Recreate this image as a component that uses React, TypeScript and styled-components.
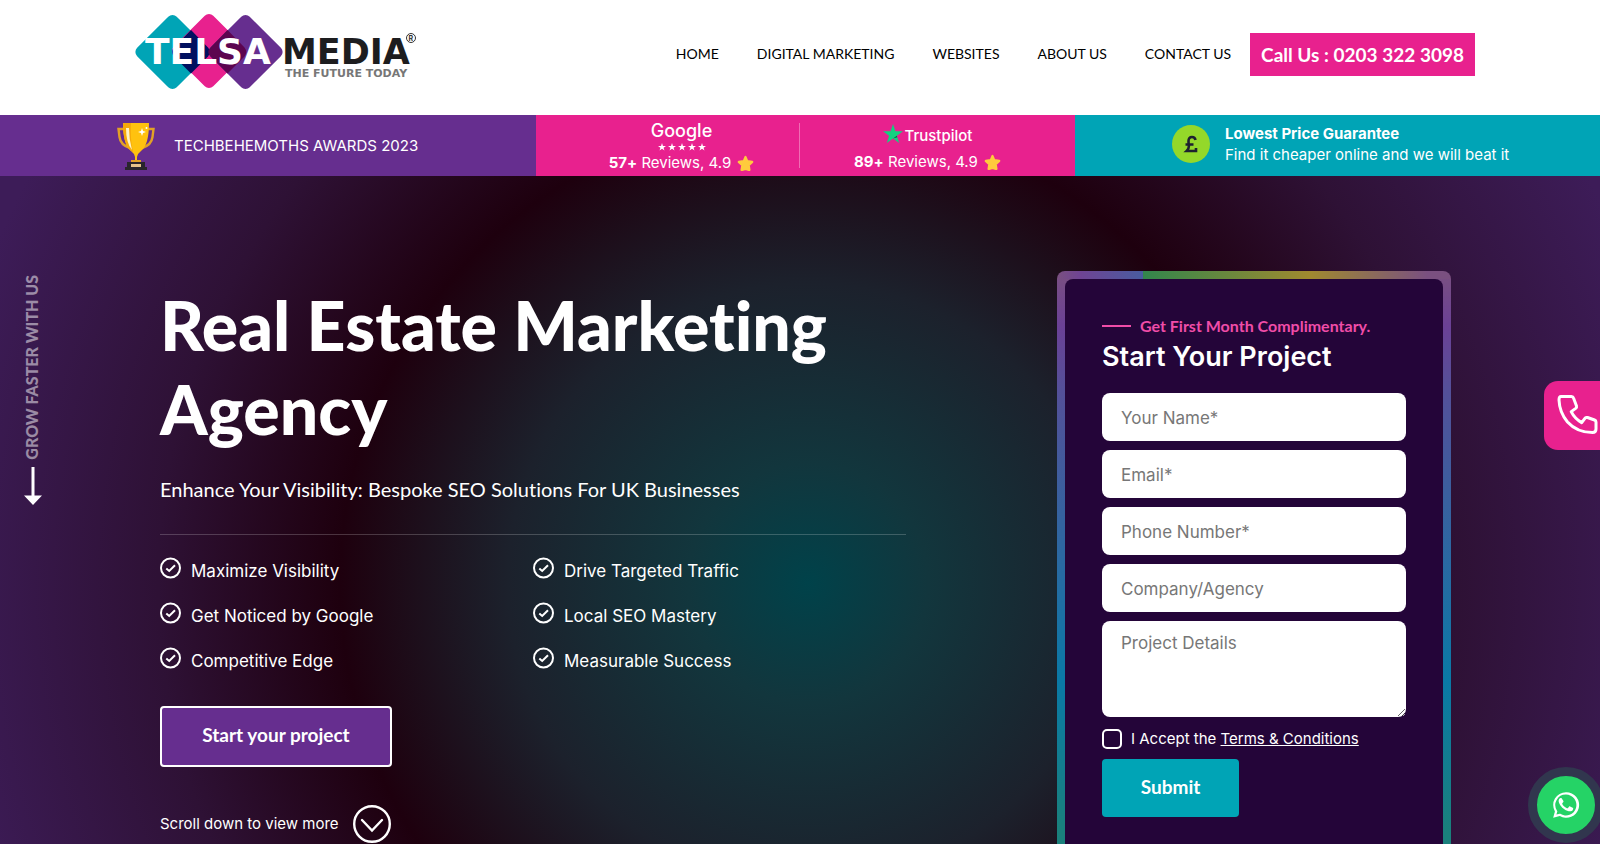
import React from 'react';
import styled, { createGlobalStyle } from 'styled-components';

const display = `Lato, "Liberation Sans", sans-serif`;
const body = `Inter, "Liberation Sans", sans-serif`;

const GlobalStyle = createGlobalStyle`
  *, *::before, *::after { box-sizing: border-box; }
  html { scrollbar-width: none; }
  body { margin: 0; background: #fff; color: #fff; font-family: ${body}; font-variant-ligatures: none; overflow-x: hidden; }
  h1, h2, p, ul { margin: 0; padding: 0; }
  ul { list-style: none; }
  a { color: inherit; text-decoration: none; }
`;

const Page = styled.div`
  height: 100vh;
  overflow: hidden auto;
  scrollbar-width: none;
`;

const Header = styled.header`
  display: flex;
  align-items: flex-start;
  justify-content: space-between;
  height: 115px;
  padding: 12px 125px 0 135px;
  background: #fff;
`;

const LogoLink = styled.a`
  display: block;
  line-height: 0;
`;

const Nav = styled.nav`
  display: flex;
  align-items: center;
  padding-top: 21px;
  color: #000;
  font-family: ${display};
  font-size: 14px;
  line-height: 20px;
`;

const NavLinks = styled.ul`
  display: flex;
  gap: 38px;
  margin-right: 19px;
  padding-bottom: 1px;
`;

const CallLink = styled.a`
  padding: 0 11px;
  background: #e8218e;
  color: #fff;
  font-weight: 700;
  font-size: 19px;
  line-height: 43px;
`;

const Bar = styled.div`
  display: grid;
  grid-template-columns: 536fr 264fr 275fr 525fr;
  height: 61px;
`;

const BarCell = styled.div<{ $bg: string; $left: number; $gap: number }>`
  display: flex;
  align-items: center;
  gap: ${(p) => p.$gap}px;
  padding-left: ${(p) => p.$left}px;
  background: ${(p) => p.$bg};
  font-size: 15px;
  line-height: 21px;
`;

const Guarantee = styled(BarCell)`
  padding-bottom: 3px;
`;

const ReviewCell = styled.div<{ $divider?: boolean }>`
  position: relative;
  display: flex;
  flex-direction: column;
  align-items: center;
  padding: 5px ${(p) => (p.$divider ? 0 : 20)}px 0 ${(p) => (p.$divider ? 27 : 0)}px;
  background: #e8218e;
  &::after {
    content: '';
    position: absolute;
    inset: 8px 0 8px auto;
    width: ${(p) => (p.$divider ? 1 : 0)}px;
    background: #f06cb4;
  }
`;

const Brand = styled.div<{ $size: number; $height: number }>`
  display: flex;
  align-items: center;
  gap: 2px;
  font-size: ${(p) => p.$size}px;
  line-height: ${(p) => p.$height}px;
  font-weight: 500;
  svg { margin-bottom: 4px; }
`;

const StarRow = styled.div`
  display: flex;
  gap: 2px;
  height: 12px;
  align-items: center;
`;

const Reviews = styled.p`
  display: flex;
  align-items: center;
  gap: 6px;
  font-size: 15px;
  line-height: 20px;
`;

const Hero = styled.section`
  position: relative;
  display: flex;
  justify-content: space-between;
  align-items: flex-start;
  padding: 95px 149px 40px 160px;
  background: radial-gradient(
    circle at 50.5% 407px,
    #00424a 0,
    #12363d 120px,
    #1c212c 300px,
    #1e000e 468px,
    #2e1135 650px,
    #3d1c58 880px
  );
`;

const Intro = styled.div`
  width: 746px;
  padding-top: 12px;
`;

const Title = styled.h1`
  font: 900 68px/84px ${display};
  font-variant-ligatures: none;
`;

const Lead = styled.p`
  padding: 26px 0 33px;
  border-bottom: 1px solid rgba(255, 255, 255, 0.2);
  font-family: ${display};
  font-size: 20px;
  line-height: 24px;
`;

const Benefits = styled.ul`
  display: grid;
  grid-template-columns: 1fr 1fr;
  row-gap: 23px;
  padding: 22px 0 37px;
`;

const Benefit = styled.li`
  display: flex;
  gap: 9px;
  font-size: 17px;
  line-height: 22px;
  svg { flex: none; }
  span { padding-top: 3px; height: 22px; }
`;

const StartLink = styled.a`
  display: block;
  width: 232px;
  padding-bottom: 3px;
  border: 2px solid #fff;
  border-radius: 4px;
  background: #662e8f;
  text-align: center;
  font-family: ${display};
  font-weight: 700;
  font-size: 19px;
  line-height: 54px;
`;

const ScrollLink = styled.a`
  display: flex;
  align-items: center;
  gap: 14px;
  margin-top: 38px;
  font-size: 15px;
  line-height: 20px;
`;

const Card = styled.form`
  width: 394px;
  padding: 8px;
  border-radius: 8px;
  background:
    linear-gradient(90deg, #7a5080 0, #6f4494 6%, #495c9f 21.7%, #32864c 21.8%, #a08a2f 64%, #7a5080 94%) 0 0 / 100% 8px no-repeat,
    linear-gradient(#7a5080 0, #6b4196 55px, #545099 120px, #2a69a2 290px, #0a79a6 410px, #1a807c 560px, #1a807c 100%);
`;

const CardBody = styled.div`
  padding: 36px 37px 40px;
  border-radius: 8px;
  background: #240539;
`;

const Eyebrow = styled.p`
  display: flex;
  align-items: center;
  gap: 9px;
  color: #f04da8;
  font-family: ${display};
  font-weight: 700;
  font-size: 16px;
  line-height: 22px;
  &::before {
    content: '';
    width: 29px;
    height: 2px;
    background: #f04da8;
  }
`;

const CardTitle = styled.h2`
  padding-bottom: 16px;
  font-weight: 600;
  font-size: 27px;
  line-height: 40px;
`;

const Fields = styled.div`
  display: grid;
  gap: 9px;
`;

const Input = styled.input`
  width: 100%;
  height: 48px;
  padding: 2px 19px 0;
  border: 0;
  border-radius: 8px;
  background: #fff;
  font: 400 17px/24px ${body};
  &::placeholder { color: #777; }
`;

const TextArea = styled.textarea`
  display: block;
  width: 100%;
  height: 96px;
  padding: 10px 19px;
  border: 0;
  border-radius: 8px;
  background: #fff;
  font: 400 17px/24px ${body};
  resize: vertical;
  &::placeholder { color: #777; }
`;

const Accept = styled.label`
  display: flex;
  align-items: center;
  gap: 9px;
  padding: 10px 0;
  font-size: 15px;
  line-height: 21px;
  a { text-decoration: underline; }
`;

const Check = styled.input`
  appearance: none;
  width: 20px;
  height: 20px;
  margin: 2px 0 0;
  border: 2px solid #fff;
  border-radius: 5px;
`;

const Submit = styled.button`
  width: 137px;
  height: 58px;
  padding: 0 0 3px;
  border: 0;
  border-radius: 4px;
  background: #00a4b6;
  color: #fff;
  font: 700 19px/24px ${display};
`;

const SideNote = styled.div`
  position: absolute;
  top: 99px;
  left: 23px;
  display: flex;
  flex-direction: column;
  align-items: center;
  gap: 6px;
  span {
    writing-mode: vertical-rl;
    rotate: 180deg;
    margin-right: 2px;
    color: rgba(255, 255, 255, 0.5);
    font: 900 16px/18px ${display};
  }
`;

const PhoneTab = styled.a`
  position: absolute;
  top: 205px;
  right: 0;
  width: 56px;
  height: 69px;
  padding: 13px 0 0 13px;
  border-radius: 14px 0 0 14px;
  background: #e8218e;
`;

const WhatsApp = styled.a`
  position: fixed;
  right: -4px;
  bottom: 1px;
  display: grid;
  place-items: center;
  width: 76px;
  height: 76px;
  border: 9px solid #31364e;
  border-radius: 50%;
  background: #25d366;
`;

const Logo = () => (
  <svg width="284" height="80" viewBox="0 0 284 80" role="img" aria-label="Telsa Media">
    <rect x="9.500" y="12" width="56" height="56" rx="6" transform="rotate(45 37.500 40)" fill="#00a4b6" />
    <rect x="46" y="11" width="56" height="56" rx="6" transform="rotate(45 74 39)" fill="#e8218e" />
    <rect x="82.500" y="12" width="56" height="56" rx="6" transform="rotate(45 110.500 40)" fill="#662e8f" />
    <path d="M56 18 73 35.500Q77 40 73 44.500L56 61.500 39 44.500Q35 40 39 35.500Z" fill="#00105f" />
    <path d="M92.500 18 109.500 35.500Q113 40 109.500 44.500L92.500 61.500 75.500 44.500Q71 40 75.500 35.500Z" fill="#5c0550" />
    <g fontFamily="DejaVu Sans, sans-serif" fontWeight="700">
      <text x="10" y="52" fontSize="36" fill="#fff">TELSA</text>
      <text x="147" y="52" fontSize="35" fill="#1d1d1f">MEDIA</text>
      <text x="150" y="65" fontSize="11" fill="#777">THE FUTURE TODAY</text>
    </g>
    <circle cx="276" cy="26" r="4.500" fill="none" stroke="#333" />
    <text x="273.500" y="29" fontSize="7" fontFamily="Inter, sans-serif" fontWeight="700" fill="#333">R</text>
  </svg>
);

const Trophy = () => (
  <svg width="38" height="48" viewBox="0 0 38 48" aria-hidden="true">
    <path d="M8 7H1.500l1 8q1 8 10.500 11M30 7h6.500l-1 8q-1 8-10.500 11" fill="none" stroke="#e2a126" strokeWidth="2.400" />
    <path d="M6 1h26q0 22-8 28-3 2-4 6v4h-2v-4q-1-4-4-6Q6 23 6 1Z" fill="#ffc20f" />
    <path d="M6 1h8q-1 16 2 29-2-1-4-3Q6 20 6 1Z" fill="#f5a90a" />
    <path d="M9 6q0 15 6 22-3-11-3-22Z" fill="#fff3c4" />
    <path d="m25 6 1 3 3 1-3 1-1 3-1-3-3-1 3-1Z" fill="#fff" />
    <circle cx="29.500" cy="6" r="1" fill="#fff" />
    <path d="M14 38h10v3H14Z" fill="#e2a126" />
    <path d="M10 40h18v5h2v3H8v-3h2Z" fill="#29252c" />
    <path d="M14 42h10v3H14Z" fill="#e5c28b" />
  </svg>
);

const Star = ({ size, color, notch }: { size: number; color: string; notch?: boolean }) => (
  <svg width={size} height={size} viewBox="0 0 20 20" aria-hidden="true">
    <path d="m10 0 2.400 7.200H20l-6.100 4.500 2.300 7.300-6.200-4.500L3.800 19l2.300-7.300L0 7.200h7.600Z" fill={color} />
    {notch && <path d="m10 14.500 4.300-1.200-.5-1.500Z" fill="#0a5b4a" />}
  </svg>
);

const RoundStar = () => (
  <svg width="17" height="17" viewBox="0 0 20 20" aria-hidden="true">
    <path d="m10 2.300 2.100 4.900 5.900.9-4.200 4 .9 5.400H14l-4-1-4 1h-.700l.9-5.400-4.200-4 5.900-.9Z" fill="#ffcb3d" stroke="#ffcb3d" strokeWidth="2.500" strokeLinejoin="round" />
  </svg>
);

const CheckIcon = () => (
  <svg width="22" height="22" viewBox="0 0 22 22" fill="none" stroke="#fff" strokeWidth="2" aria-hidden="true">
    <circle cx="10.500" cy="11" r="9.500" />
    <path d="m6.300 11.500 2.900 2.500 5.800-5.800" />
  </svg>
);

const ChevronCircle = () => (
  <svg width="38" height="38" viewBox="0 0 38 38" fill="none" stroke="#fff" strokeWidth="2.400" aria-hidden="true">
    <circle cx="19" cy="19" r="17.800" />
    <path d="m9 15 10 10.500L29 15" strokeLinecap="round" />
  </svg>
);

const benefits = [
  'Maximize Visibility', 'Drive Targeted Traffic',
  'Get Noticed by Google', 'Local SEO Mastery',
  'Competitive Edge', 'Measurable Success',
];

const links = ['HOME', 'DIGITAL MARKETING', 'WEBSITES', 'ABOUT US', 'CONTACT US'];

export default function App() {
  return (
    <Page>
      <GlobalStyle />
      <Header>
        <LogoLink href="#"><Logo /></LogoLink>
        <Nav>
          <NavLinks>
            {links.map((l) => <li key={l}><a href="#">{l}</a></li>)}
          </NavLinks>
          <CallLink href="tel:02033223098">Call Us : 0203 322 3098</CallLink>
        </Nav>
      </Header>
      <Bar>
        <BarCell $bg="#662e8f" $left={117} $gap={19}>
          <Trophy />
          <span>TECHBEHEMOTHS AWARDS 2023</span>
        </BarCell>
        <ReviewCell $divider>
          <Brand $size={18} $height={21}>Google</Brand>
          <StarRow>{[0, 1, 2, 3, 4].map((i) => <Star key={i} size={8} color="#fff" />)}</StarRow>
          <Reviews><span><b>57+</b> Reviews, 4.9</span><RoundStar /></Reviews>
        </ReviewCell>
        <ReviewCell>
          <Brand $size={15} $height={32}><Star size={20} color="#12d180" notch />Trustpilot</Brand>
          <Reviews><span><b>89+</b> Reviews, 4.9</span><RoundStar /></Reviews>
        </ReviewCell>
        <Guarantee $bg="#00a4b6" $left={97} $gap={15}>
          <svg width="38" height="38" viewBox="0 0 38 38" aria-hidden="true">
            <circle cx="19" cy="19" r="19" fill="#94d82a" />
            <path d="M23.500 15q-.6-3-3.500-3-3.500 0-3.500 4 0 2.500.4 5 0 3-2.200 5H24v-3M13.500 19.500h8" fill="none" stroke="#1e2130" strokeWidth="2.600" />
          </svg>
          <div>
            <b>Lowest Price Guarantee</b>
            <p>Find it cheaper online and we will beat it</p>
          </div>
        </Guarantee>
      </Bar>
      <Hero>
        <SideNote>
          <span>GROW FASTER WITH US</span>
          <svg width="20" height="40" viewBox="0 0 20 40" aria-hidden="true">
            <path d="M8.500 1h3v28.500H19L10 39 1 29.500h7.500Z" fill="#fff" />
          </svg>
        </SideNote>
        <Intro>
          <Title>Real Estate Marketing Agency</Title>
          <Lead>Enhance Your Visibility: Bespoke SEO Solutions For UK Businesses</Lead>
          <Benefits>
            {benefits.map((b) => <Benefit key={b}><CheckIcon /><span>{b}</span></Benefit>)}
          </Benefits>
          <StartLink href="#">Start your project</StartLink>
          <ScrollLink href="#">Scroll down to view more <ChevronCircle /></ScrollLink>
        </Intro>
        <Card>
          <CardBody>
            <Eyebrow>Get First Month Complimentary.</Eyebrow>
            <CardTitle>Start Your Project</CardTitle>
            <Fields>
              <Input aria-label="Your Name" placeholder="Your Name*" />
              <Input aria-label="Email" type="email" placeholder="Email*" />
              <Input aria-label="Phone Number" type="tel" placeholder="Phone Number*" />
              <Input aria-label="Company or agency" placeholder="Company/Agency" />
              <TextArea aria-label="Project Details" placeholder="Project Details" />
            </Fields>
            <Accept>
              <Check type="checkbox" />
              <span>I Accept the <a href="#">Terms &amp; Conditions</a></span>
            </Accept>
            <Submit type="button">Submit</Submit>
          </CardBody>
        </Card>
        <PhoneTab href="tel:02033223098" aria-label="Call us">
          <svg width="42" height="42" viewBox="0 0 42 42" fill="none" stroke="#fff" strokeWidth="3" strokeLinejoin="round" aria-hidden="true">
            <path d="M4 2.500h10.500q1.500 0 2 1.500l3 8q.4 1.500-.8 2.400l-4.500 3.200q3.500 7 10.500 11l3.400-4.500q1-1 2.400-.6l7 2.500q1.500.6 1.500 2v7q0 3.500-3.500 3.500Q20 38.500 10.500 28 2.500 18.500 2 6 2 2.500 4 2.500Z" />
          </svg>
        </PhoneTab>
      </Hero>
      <WhatsApp href="#" aria-label="WhatsApp">
        <svg width="28" height="28" viewBox="0 0 24 24" fill="#fff" aria-hidden="true">
          <path d="M12 1a11 11 0 0 0-9.500 16.500L1 23l5.700-1.500A11 11 0 1 0 12 1Zm0 2a9 9 0 1 1-4.900 16.600l-.4-.2-2.900.8.8-2.800-.3-.5A9 9 0 0 1 12 3Z" />
          <path d="M8.500 6.700c-.3-.6-.6-.6-1-.6-1 .1-1.900 1.300-1.800 2.700.2 2.300 3 6.600 7.300 8.100 2.600 1 4 .4 4.700-.5.5-.7.500-1.700.4-1.900l-2.600-1.300c-.4-.2-.7-.1-.9.200l-.9 1.200c-.2.300-.5.300-.9.100-2.100-.9-3.300-2.300-4-3.600-.2-.4 0-.6.200-.8l.7-.9c.2-.3.200-.5.100-.8Z" />
        </svg>
      </WhatsApp>
    </Page>
  );
}
